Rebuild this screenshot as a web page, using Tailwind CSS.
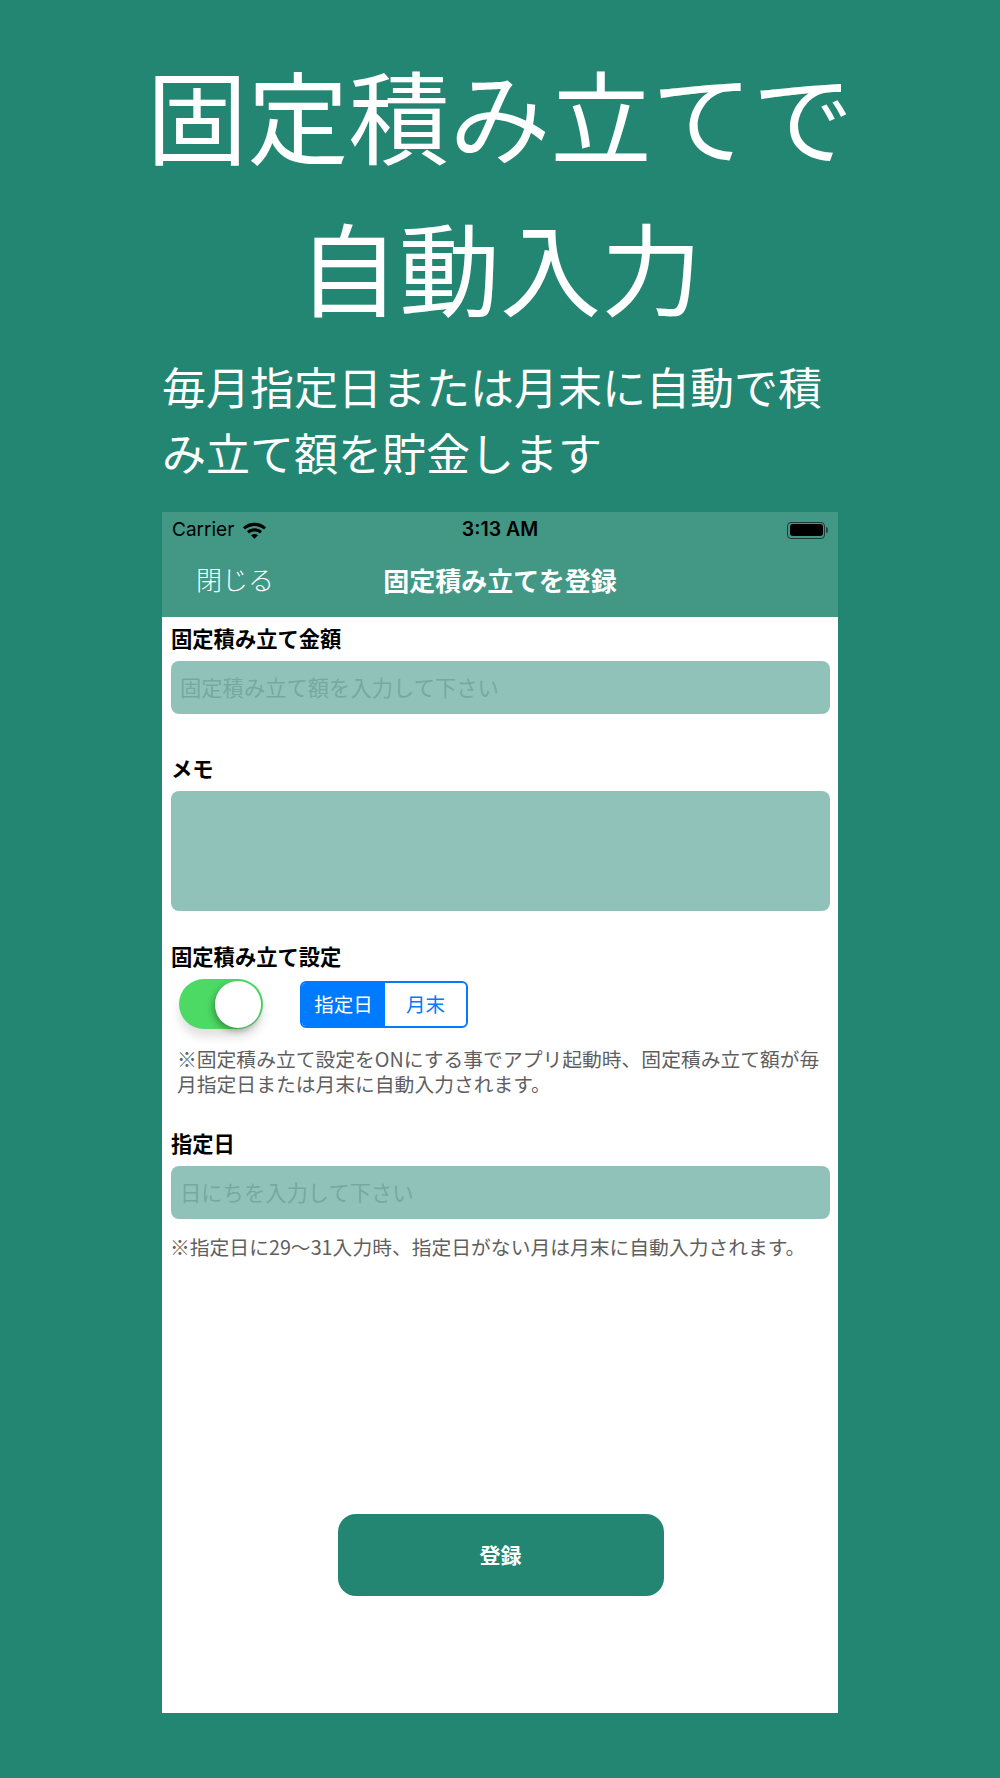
<!DOCTYPE html>
<html lang="ja">
<head>
<meta charset="UTF-8" />
<title>固定積み立て</title>
<script src="https://cdn.jsdelivr.net/npm/@tailwindcss/browser@4"></script>
</head>
<body class="m-0 w-[1000px] h-[1778px] overflow-hidden bg-[#228672] font-['Noto_Sans_CJK_JP','Noto_Sans',sans-serif]">

  <!-- 見出し -->
  <header class="h-[512px] flex flex-col items-center text-white">
    <h1 class="mt-[38px] text-[101px] leading-[150px] font-normal whitespace-nowrap">固定積み立てで</h1>
    <h1 class="mt-[2px] text-[101px] leading-[150px] font-normal whitespace-nowrap">自動入力</h1>
    <p class="w-[676px] mt-[13px] text-[44px] leading-[66px] font-normal whitespace-nowrap">毎月指定日または月末に自動で積<br />み立て額を貯金します</p>
  </header>

  <!-- スクリーンショット -->
  <main class="mx-auto w-[676px] h-[1201px] bg-white flex flex-col">
    <div class="h-[105px] bg-[#429785] shrink-0">
      <div class="h-[36px] px-[10px] flex items-center justify-between text-[19px] text-black font-['Inter',sans-serif]">
        <div class="w-[200px] flex items-center gap-[8px]">
          <span>Carrier</span>
          <svg width="25" height="18" viewBox="0 0 25 18" fill="#000"><path d="M1 6.200C7.600.4 17.400.4 24 6.200l-2 2.200C16.500 3.700 8.500 3.700 3 8.400Z"/><path d="M5 10.200c4.500-3.800 10.500-3.800 15 0l-2.100 2.200c-3.300-2.600-7.500-2.600-10.800 0Z"/><path d="M9 14.200c2.200-1.600 4.800-1.600 7 0l-3.500 3.500Z"/></svg>
        </div>
        <span class="font-semibold text-[19.500px]">3:13 AM</span>
        <div class="w-[200px] flex justify-end items-center">
          <div class="w-[38px] h-[17px] rounded-[4px] border border-black/60 p-[1.500px]"><div class="w-full h-full rounded-[3px] bg-black"></div></div>
          <div class="w-[2px] h-[6px] bg-black/50 rounded-r-sm ml-px"></div>
        </div>
      </div>
      <div class="relative h-[69px] flex items-center justify-center text-white">
        <span class="absolute left-[34px] top-[13px] text-[26px] leading-[36px] font-light">閉じる</span>
        <span class="mt-[-6px] text-[26px] font-bold">固定積み立てを登録</span>
      </div>
    </div>

    <div class="flex-1 pl-[9px] pr-[8px] flex flex-col">
      <label class="mt-[8px] h-[36px] text-[21.300px] leading-[26px] font-bold text-black">固定積み立て金額</label>
      <div class="h-[53px] rounded-[8px] bg-[#91c2ba] px-[9px] text-[21.300px] leading-[51px] text-[#75a9a0]">固定積み立て額を入力して下さい</div>

      <label class="mt-[37px] h-[40px] text-[21.300px] leading-[34px] font-bold text-black">メモ</label>
      <div class="h-[120px] rounded-[8px] bg-[#91c2ba]"></div>

      <label class="mt-[28px] h-[40px] text-[21.300px] leading-[34px] font-bold text-black">固定積み立て設定</label>
      <div class="h-[50px] flex items-center pl-[8px] gap-[37px]">
        <div class="w-[84px] h-[50px] rounded-full bg-[#4cd964] flex items-center justify-end shadow-[0_8px_10px_rgba(0,0,0,0.12)]">
          <div class="w-[46px] h-[47px] mr-[2px] rounded-full bg-white shadow-[-2px_3px_6px_rgba(0,0,0,0.3)]"></div>
        </div>
        <div class="w-[168px] h-[47px] flex rounded-[6px] border-2 border-[#007aff] overflow-hidden text-[19.500px] leading-[42px] text-center">
          <span class="w-[83px] bg-[#007aff] text-white">指定日</span>
          <span class="flex-1 text-[#007aff]">月末</span>
        </div>
      </div>
      <p class="mt-[17px] pl-[6px] text-[19.800px] leading-[25px] text-[#5f5f5f] whitespace-nowrap">※固定積み立て設定をONにする事でアプリ起動時、固定積み立て額が毎<br />月指定日または月末に自動入力されます。</p>

      <label class="mt-[30px] h-[40px] text-[21.300px] leading-[33px] font-bold text-black">指定日</label>
      <div class="h-[53px] rounded-[8px] bg-[#91c2ba] px-[9px] text-[21.300px] leading-[51px] text-[#75a9a0]">日にちを入力して下さい</div>
      <p class="mt-[13px] -ml-px text-[19.800px] leading-[30px] text-[#5f5f5f] whitespace-nowrap">※指定日に29～31入力時、指定日がない月は月末に自動入力されます。</p>

      <div class="mt-[252px] mx-auto w-[326px] h-[82px] rounded-[18px] bg-[#228672] text-white text-[21px] font-bold text-center leading-[81px]">登録</div>
    </div>
  </main>
</body>
</html>
